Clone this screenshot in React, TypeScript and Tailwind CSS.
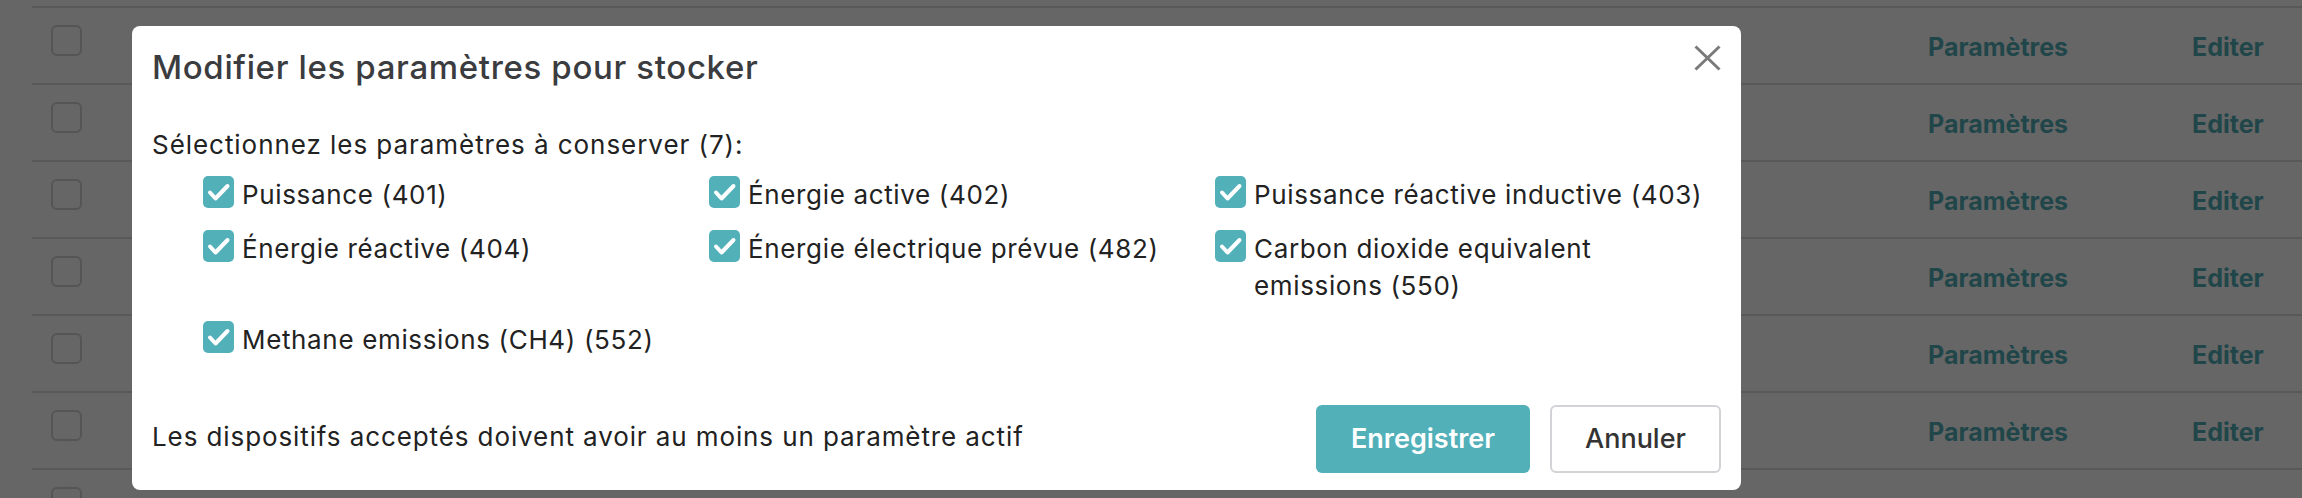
const params = [
  'Puissance (401)',
  'Énergie active (402)',
  'Puissance réactive inductive (403)',
  'Énergie réactive (404)',
  'Énergie électrique prévue (482)',
  'Carbon dioxide equivalent emissions (550)',
  'Methane emissions (CH4) (552)',
];

function CheckIcon() {
  return (
    <svg width="31" height="32" viewBox="0 0 31 32" aria-hidden>
      <rect width="31" height="32" rx="5" fill="#52b0b9" />
      <path
        d="M7 16.5 L12.5 22.5 L24.5 10"
        fill="none"
        stroke="#fff"
        strokeWidth="4"
        strokeLinecap="round"
        strokeLinejoin="round"
      />
    </svg>
  );
}

function CloseIcon() {
  return (
    <svg width="27" height="26" viewBox="0 0 27 26" aria-hidden>
      <path d="M1.5 1.5 L25.5 24.5 M25.5 1.5 L1.5 24.5" stroke="#7a7a7a" strokeWidth="3" />
    </svg>
  );
}

function TableRow() {
  return (
    <div className="flex h-[77px] border-t-2 border-[#dedede]">
      <div className="mt-[17px] ml-[19px] h-[31px] w-[31px] rounded-md border-2 border-[#d4d4d4]" />
      <div className="ml-auto flex">
        <span className="mt-[24px] w-[264px] text-[25px] leading-[30px] font-bold text-[#52b0b9]">
          Paramètres
        </span>
        <span className="mt-[24px] w-[110px] text-[25px] leading-[30px] font-bold text-[#52b0b9]">
          Editer
        </span>
      </div>
    </div>
  );
}

export default function App() {
  return (
    <div className="relative h-[498px] w-[2302px] overflow-hidden bg-white font-['Inter',sans-serif]">
      <div className="pt-[6px] pl-[32px]">
        {[0, 1, 2, 3, 4, 5, 6].map((i) => (
          <TableRow key={i} />
        ))}
      </div>

      <div className="absolute inset-0 bg-black/60" />

      <div className="absolute top-[26px] left-[132px] h-[464px] w-[1609px] rounded-lg bg-white px-[20px] pt-[21px]">
        <div className="flex items-start justify-between">
          <h2 className="text-[33px] leading-[40px] font-medium tracking-[0.65px] text-[#3b3c40]">
            Modifier les paramètres pour stocker
          </h2>
          <button className="-mt-[2px] text-[#7a7a7a]" aria-label="Fermer">
            <CloseIcon />
          </button>
        </div>

        <p className="mt-[39px] text-[26px] leading-[37px] tracking-[0.95px] text-[#222]">
          Sélectionnez les paramètres à conserver (7):
        </p>

        <div className="mt-[13px] grid grid-cols-3 gap-y-[17px] pl-[51px]">
          {params.map((p) => (
            <label key={p} className="flex items-start gap-[8px]">
              <span className="shrink-0">
                <CheckIcon />
              </span>
              <span className="pr-[14px] text-[26px] leading-[37px] tracking-[0.65px] text-[#222]">
                {p}
              </span>
            </label>
          ))}
        </div>

        <div className="mt-[47px] flex items-center justify-between">
          <p className="mb-[6px] text-[26px] leading-[37px] tracking-[0.9px] text-[#222]">
            Les dispositifs acceptés doivent avoir au moins un paramètre actif
          </p>
          <div className="flex gap-[20px]">
            <button className="h-[68px] w-[214px] rounded-md bg-[#52b0b9] text-[27px] font-semibold text-white">
              Enregistrer
            </button>
            <button className="h-[68px] w-[171px] rounded-md border-2 border-[#d3d3d7] text-[27px] font-medium text-[#333]">
              Annuler
            </button>
          </div>
        </div>
      </div>
    </div>
  );
}
